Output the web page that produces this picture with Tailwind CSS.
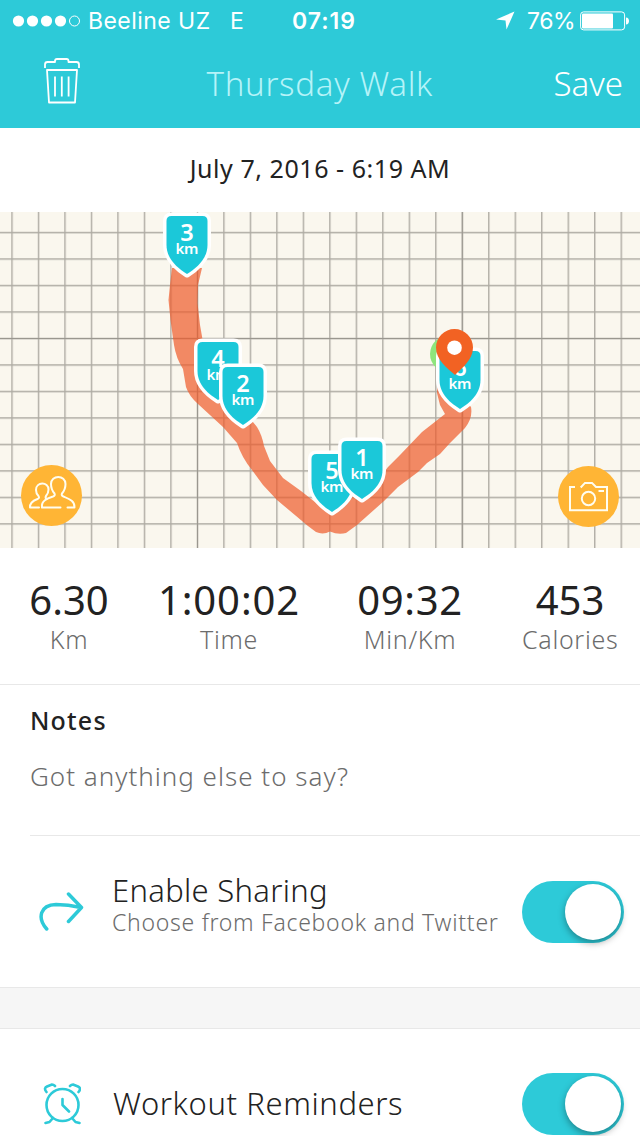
<!DOCTYPE html>
<html lang="en">
<head>
    <meta charset="UTF-8">
    <meta name="viewport" content="width=device-width, initial-scale=1.0">
    <title>Thursday Walk</title>
    <script src="https://cdn.jsdelivr.net/npm/@tailwindcss/browser@4"></script>
</head>
<body class="bg-white w-[640px] h-[1136px] overflow-hidden font-['Noto_Sans',sans-serif] text-[#222]">
    <header class="bg-[#2dcad8] h-32 text-white">
        <!-- Status bar -->
        <div class="h-10 flex items-center pl-3 pr-[10px] pt-px font-['Inter',sans-serif] text-[23px] leading-10 whitespace-nowrap">
            <svg class="w-[69px] h-4 shrink-0" viewBox="0 0 69 16" fill="#fff">
                <circle cx="6.5" cy="8" r="5.6"/>
                <circle cx="20.5" cy="8" r="5.6"/>
                <circle cx="34.5" cy="8" r="5.6"/>
                <circle cx="48.5" cy="8" r="5.6"/>
                <circle cx="62.5" cy="8" r="5" fill="none" stroke="#fff"/>
            </svg>
            <span class="ml-[7px] w-[142px] tracking-[0.45px]">Beeline UZ</span>
            <span class="w-[62px]">E</span>
            <span class="w-[204px] font-semibold tracking-[1px]">07:19</span>
            <svg class="w-[19px] h-[19px] shrink-0" viewBox="0 0 19 19" fill="#fff"><path d="M18.5 .5L0 8.5l9.5 1L10.5 18.5z"/></svg>
            <span class="ml-[12px] w-[53px] tracking-[-0.5px]">76%</span>
            <svg class="w-[49px] h-5 shrink-0" viewBox="0 0 49 20">
                <rect x=".6" y=".9" width="44" height="18" rx="3" fill="none" stroke="#fff"/>
                <rect x="2" y="2.5" width="31" height="15" rx="1" fill="#fff"/>
                <path d="M46 6.5c4 0 4 7 0 7z" fill="#fff"/>
            </svg>
        </div>
        <!-- Navigation bar -->
        <div class="h-[88px] flex items-center justify-between pl-11 pr-[17px] text-[33px] font-light">
            <svg class="w-9 h-[46px] mb-[7px]" viewBox="0 0 36 46" fill="none" stroke="#fff" stroke-width="1.8" stroke-linejoin="round">
                <path d="M1 10V6.5Q1 4 3.5 4H11V3Q11 1 13 1H22.500Q24.500 1 24.500 3V4H32.500Q35 4 35 6.500V10M3 12H33L31 44.500H5z"/>
                <path d="M11 18.500V38.500M17.800 18.500V38.500M24.600 18.500V38.500"/>
            </svg>
            <h1 class="text-[#b5f3f8] ml-[6px] tracking-[0.7px]">Thursday Walk</h1>
            <button class="font-light">Save</button>
        </div>
    </header>

    <p class="h-[84px] flex items-center justify-center pb-0.5 text-[25px] tracking-[0.55px]">July 7, 2016 - 6:19 AM</p>

    <!-- Route map -->
    <div class="h-[336px]">
        <svg class="w-[640px] h-[336px] block" viewBox="0 212 640 336">
            <defs>
                <pattern id="grid" x="11.300" y="231.800" width="26.490" height="26.490" patternUnits="userSpaceOnUse">
                    <path d="M.7 0V26.490M0 .7H26.490" stroke="#aeaba3" stroke-width="1.400"/>
                </pattern>
                <g id="badge">
                    <path d="M5 0H36Q41 0 41 5V29C41 43 30 52 20.500 58C11 52 0 43 0 29V5Q0 0 5 0z" fill="#1bc8d9" stroke="#fff" stroke-width="7" stroke-linejoin="round" paint-order="stroke"/>
                    <text x="20.500" y="38" font-size="15" textLength="23">km</text>
                </g>
            </defs>
            <rect y="212" width="640" height="336" fill="#faf7ee"/>
            <rect y="212" width="640" height="336" fill="url(#grid)"/>
            <path d="M197.500 212V548M462.300 212V548M0 338.500H640" stroke="#9a978f"/>
            <path d="M172 268L170 285L168.500 300L170.500 320L174 345Q176 358 183 369L186 387Q189 396 198 404L223 427L237 443Q242 458 252 470L263 485L277 500L308 526L316 532Q323 535 330 531.500Q338 535 346 533L357 525L384 501L398 487L418 472L427 463L440 454L450 443L465 428Q473 418 471 407L460 395L437 385L437 393L440 405L445 414L422 432L400 455L388 467L375 484L332 505L320 506L301 491L283 478L270 461L264 446Q262 435 257 427L235 400L207 365L200 325L197.500 303L198 285L202 268z" fill="#ee5a29" fill-opacity=".7"/>
            <g fill="#fff" text-anchor="middle" font-family="Noto Sans, sans-serif" font-weight="600" font-size="23.500">
                <g transform="translate(166.500 216)"><use href="#badge"/><text x="20.500" y="25">3</text></g>
                <g transform="translate(197.500 342)"><use href="#badge"/><text x="20.500" y="25">4</text></g>
                <g transform="translate(222.500 367)"><use href="#badge"/><text x="20.500" y="25">2</text></g>
                <g transform="translate(311.500 454)"><use href="#badge"/><text x="20.500" y="25">5</text></g>
                <g transform="translate(341.500 441)"><use href="#badge"/><text x="20.500" y="25">1</text></g>
                <circle cx="448.500" cy="354" r="18.500" fill="#8ee57c"/>
                <g transform="translate(439.500 351)"><use href="#badge"/><text x="20.500" y="25">6</text></g>
            </g>
            <path d="M454.500 329A18.500 18.500 0 0 1 473 347.500C473 360 462 368 455 375C447 368 436 360 436 347.500A18.500 18.500 0 0 1 454.500 329z" fill="#f26223"/>
            <circle cx="454.500" cy="347.700" r="7.300" fill="#fff"/>
            <!-- Friends button -->
            <circle cx="51.500" cy="495.500" r="30.500" fill="#ffb535"/>
            <g fill="none" stroke="#fffdf0" stroke-width="2" stroke-linecap="round" stroke-linejoin="round">
                <path d="M60.500 507.500H42C41 501 47 498.500 53 496.500Q55.500 495.500 54.500 493.500Q51 489.500 51 484C51 474.500 65.500 474.500 65.500 484Q65.500 489.500 62 493.500Q61 495.500 63.500 496.500C69.500 499 75 501 74.500 507.500H67.500"/>
                <path d="M39 507.500H30C29.500 502.500 33.500 500.500 37.500 499Q40 498 38.500 496Q36 493.500 36 490C36 481.500 48.500 481.500 48.500 489.500Q48.500 493 46 496Q45 498 46.500 499"/>
            </g>
            <!-- Camera button -->
            <circle cx="588.500" cy="496.500" r="30.500" fill="#ffb535"/>
            <g fill="none" stroke="#fffdf0" stroke-width="2">
                <path d="M575 487H570V510.300H607V487H596L592 482.900H585L580.700 487.500"/>
                <circle cx="588.500" cy="498.500" r="6.700"/>
                <path d="M598.500 491H604"/>
            </g>
        </svg>
    </div>

    <!-- Workout stats -->
    <div class="h-[137px] border-b border-[#e8e8e8] flex pl-[29px] pt-[30px] text-center whitespace-nowrap">
        <div class="w-20">
            <p class="text-[40px] leading-[44px] -mx-2">6.30</p>
            <p class="text-[25px] leading-[34px] font-light tracking-[0.7px] text-[#6c6c6c]">Km</p>
        </div>
        <div class="w-[142px] ml-[49px]">
            <p class="text-[40px] leading-[44px] -mx-2 tracking-[0.9px]">1:00:02</p>
            <p class="text-[25px] leading-[34px] font-light tracking-[0.7px] text-[#6c6c6c]">Time</p>
        </div>
        <div class="w-[106px] ml-[57px]">
            <p class="text-[40px] leading-[44px] -mx-2 tracking-[0.7px]">09:32</p>
            <p class="text-[25px] leading-[34px] font-light tracking-[0.7px] text-[#6c6c6c]">Min/Km</p>
        </div>
        <div class="w-24 ml-[59px]">
            <p class="text-[40px] leading-[44px] -mx-2">453</p>
            <p class="text-[25px] leading-[34px] font-light tracking-[0.7px] text-[#6c6c6c]">Calories</p>
        </div>
    </div>

    <!-- Notes -->
    <div class="ml-[30px] h-[151px] border-b border-[#e8e8e8] pt-[17px]">
        <h2 class="text-[25px] leading-9 font-medium tracking-[1.2px]">Notes</h2>
        <p class="mt-5 text-[26px] leading-9 font-light tracking-[1px] text-[#6c6c6c]">Got anything else to say?</p>
    </div>

    <div class="h-[151px] flex items-center pt-px pl-[39px] pr-4 whitespace-nowrap">
        <svg class="w-[46px] h-10 shrink-0" viewBox="0 0 46 40" fill="none" stroke="#2dcad8" stroke-width="3.500" stroke-linecap="round" stroke-linejoin="round">
            <path d="M7.700 37C-2 26 1 13 17 12.500Q29 12.500 42 15.500M29.500 2L42.500 15.500L29.500 29.500"/>
        </svg>
        <div class="ml-[27px] grow mb-4">
            <h2 class="text-[31px] leading-9 font-light tracking-[0.3px]">Enable Sharing</h2>
            <p class="text-[23px] leading-7 font-light tracking-[0.72px] text-[#6c6c6c]">Choose from Facebook and Twitter</p>
        </div>
        <div class="w-[102px] h-[62px] shrink-0 rounded-full bg-[#2dcad8] p-[3px] flex justify-end">
            <span class="size-14 rounded-full bg-white shadow-[0_3px_7px_rgba(0,0,0,0.35)]"></span>
        </div>
    </div>

    <div class="h-[42px] bg-[#f6f6f6] border-y border-[#e8e8e8]"></div>

    <div class="h-[150px] flex items-center pl-[43px] pr-4 whitespace-nowrap">
        <svg class="w-[38px] h-[42px] shrink-0" viewBox="0 0 38 42" fill="none" stroke="#2dcad8" stroke-width="2.600" stroke-linecap="round" stroke-linejoin="round">
            <circle cx="19.500" cy="22" r="16"/>
            <path d="M19.500 16V22L26 28.500M10 35L6.500 39L2.500 40M29 35L32.500 39L36.500 40M3.500 9C1 6 2 4.500 4 3.500L9 1.500Q10.500 1.500 12 3M35.500 9C38 6 37 4.500 35 3.500L30 1.500Q28.500 1.500 27 3"/>
        </svg>
        <h2 class="ml-[32px] mb-0.5 grow text-[31px] leading-9 font-light tracking-[0.6px]">Workout Reminders</h2>
        <div class="w-[102px] h-[62px] shrink-0 rounded-full bg-[#2dcad8] p-[3px] flex justify-end">
            <span class="size-14 rounded-full bg-white shadow-[0_3px_7px_rgba(0,0,0,0.35)]"></span>
        </div>
    </div>
</body>
</html>
